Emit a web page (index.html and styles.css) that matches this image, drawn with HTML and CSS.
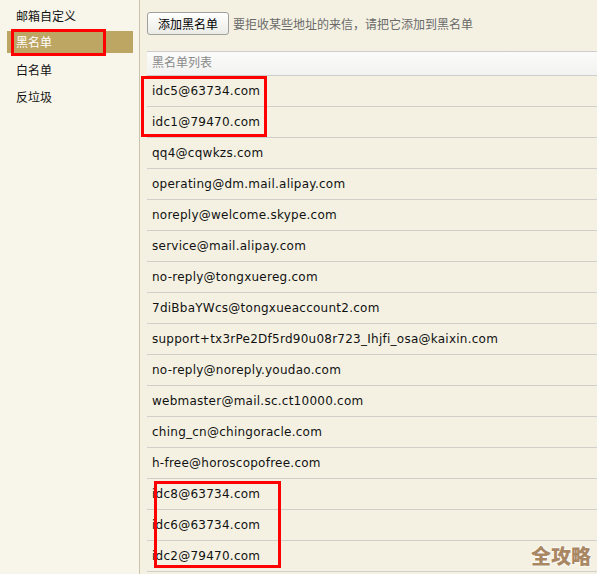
FILE: index.html
```html
<!DOCTYPE html>
<html lang="zh-CN">
<head>
<meta charset="utf-8">
<title>黑名单</title>
<link rel="stylesheet" href="styles.css">
</head>
<body>
<div class="page">
  <aside class="sidebar">
    <ul class="nav">
      <li class="nav-item">邮箱自定义</li>
      <li class="nav-item active">黑名单</li>
      <li class="nav-item">白名单</li>
      <li class="nav-item">反垃圾</li>
    </ul>
  </aside>
  <main class="main">
    <div class="toolbar">
      <button class="btn">添加黑名单</button>
      <span class="hint">要拒收某些地址的来信，请把它添加到黑名单</span>
    </div>
    <div class="list">
      <div class="list-head">黑名单列表</div>
      <div class="row">idc5@63734.com</div>
      <div class="row">idc1@79470.com</div>
      <div class="row">qq4@cqwkzs.com</div>
      <div class="row">operating@dm.mail.alipay.com</div>
      <div class="row">noreply@welcome.skype.com</div>
      <div class="row">service@mail.alipay.com</div>
      <div class="row">no-reply@tongxuereg.com</div>
      <div class="row">7diBbaYWcs@tongxueaccount2.com</div>
      <div class="row">support+tx3rPe2Df5rd90u08r723_Ihjfi_osa@kaixin.com</div>
      <div class="row">no-reply@noreply.youdao.com</div>
      <div class="row">webmaster@mail.sc.ct10000.com</div>
      <div class="row">ching_cn@chingoracle.com</div>
      <div class="row">h-free@horoscopofree.com</div>
      <div class="row">idc8@63734.com</div>
      <div class="row">idc6@63734.com</div>
      <div class="row">idc2@79470.com</div>
    </div>
  </main>
</div>
<div class="mark mark-nav"></div>
<div class="mark mark-top"></div>
<div class="mark mark-bottom"></div>
<div class="watermark">全攻略</div>
</body>
</html>
```

FILE: styles.css
```css
html, body {
  margin: 0;
  padding: 0;
  height: 100%;
  overflow: hidden;
}
body {
  background: #f4f1e3;
  font-family: "Noto Sans CJK SC", "DejaVu Sans", sans-serif;
  font-size: 12px;
  color: #000;
}
.page {
  display: flex;
  height: 574px;
}
.sidebar {
  width: 139px;
  flex: none;
  background: #f8f6ea;
  border-right: 1px solid #cbc4ad;
  box-sizing: content-box;
}
.nav {
  list-style: none;
  margin: 0;
  padding: 5px 0 0 7px;
  width: 126px;
  display: flex;
  flex-direction: column;
  gap: 5px;
}
.nav-item {
  height: 22px;
  line-height: 22px;
  padding-left: 9px;
  font-family: "Noto Sans CJK SC", sans-serif;
  font-size: 12px;
  color: #111;
}
.nav-item.active {
  background: #bda563;
  color: #fff;
  margin-top: -1px;
  margin-bottom: 1px;
}
.main {
  flex: 1;
  padding: 12px 0 0 7px;
  min-width: 0;
}
.toolbar {
  display: flex;
  align-items: center;
  gap: 4px;
  height: 23px;
}
.btn {
  height: 23px;
  width: 82px;
  padding: 0;
  border: 1px solid #a0a0a0;
  border-radius: 3px;
  background: linear-gradient(#ffffff, #ebebe6);
  font-family: "Noto Sans CJK SC", sans-serif;
  font-size: 12px;
  color: #000;
  line-height: 21px;
}
.hint {
  color: #6a6a6a;
  font-family: "Noto Sans CJK SC", sans-serif;
  font-size: 12px;
}
.list {
  margin-top: 16px;
}
.list-head {
  height: 23px;
  line-height: 20px;
  padding-bottom: 0;
  box-sizing: content-box;
  border-top: 1px solid #cccccc;
  border-bottom: 1px solid #cccccc;
  background: linear-gradient(#fbfbfb, #f2f2f0);
  color: #8a8a8a;
  padding-left: 5px;
  font-family: "Noto Sans CJK SC", sans-serif;
}
.row {
  height: 30px;
  line-height: 31px;
  border-bottom: 1px solid #d0cfca;
  padding-left: 5px;
  font-family: "DejaVu Sans", sans-serif;
  font-size: 12px;
  letter-spacing: 0.25px;
  color: #111;
  white-space: nowrap;
}
.mark {
  position: absolute;
  border: 3px solid #ff0000;
  box-sizing: border-box;
}
.mark-nav {
  left: 11px;
  top: 29px;
  width: 95px;
  height: 27px;
}
.mark-top {
  left: 141px;
  top: 76px;
  width: 126px;
  height: 61px;
}
.mark-bottom {
  left: 154px;
  top: 481px;
  width: 127px;
  height: 87px;
}
.watermark {
  position: absolute;
  left: 531px;
  top: 541px;
  font-family: "Noto Sans CJK SC", sans-serif;
  font-weight: 900;
  font-size: 20px;
  color: #a98762;
  text-shadow: 0 0 2px #fff, 0 0 2px #fff;
}
```
